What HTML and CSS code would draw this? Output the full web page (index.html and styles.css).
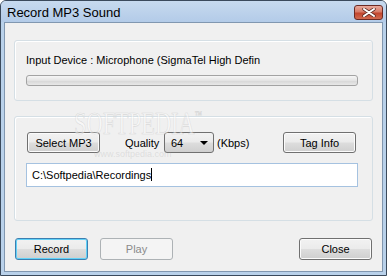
FILE: index.html
```html
<!DOCTYPE html>
<html>
<head>
    <title>Record MP3 Sound</title>
    <link rel="stylesheet" href="styles.css">
</head>
<body>
    <div class="window">
        <div class="titlebar">
            <span class="title">Record MP3 Sound</span>
            <button class="close-x" aria-label="Close">
                <svg width="14" height="9" viewBox="0 0 14 9">
                    <path d="M2 1 L12 8 M12 1 L2 8" stroke="#5a2a24" stroke-width="3.4" stroke-linecap="round"/>
                    <path d="M2 1 L12 8 M12 1 L2 8" stroke="#ffffff" stroke-width="2" stroke-linecap="round"/>
                </svg>
            </button>
        </div>
        <div class="client">
            <div class="group device-group">
                <div class="device-label">Input Device : Microphone (SigmaTel High Defin</div>
                <div class="level-bar"></div>
            </div>

            <div class="group options-group">
                <div class="options-row">
                    <button class="btn select-btn">Select MP3</button>
                    <span class="quality-label">Quality</span>
                    <div class="combo">
                        <span>64</span>
                        <span class="combo-arrow"></span>
                    </div>
                    <span class="unit-label">(Kbps)</span>
                    <button class="btn tag-btn">Tag Info</button>
                </div>
                <div class="path-input">C:\Softpedia\Recordings<span class="caret"></span></div>
            </div>

            <div class="actions">
                <button class="btn default-btn">Record</button>
                <button class="btn disabled-btn">Play</button>
                <button class="btn close-btn">Close</button>
            </div>

            <!-- faint watermark lying over the options group -->
            <div class="watermark">SOFTPEDIA<sup>™</sup></div>
            <div class="watermark-url">www.softpedia.com</div>
        </div>
    </div>
</body>
</html>
```

FILE: styles.css
```css
* {
    box-sizing: border-box;
}
body {
    margin: 0;
    font-family: "Liberation Sans", Arial, sans-serif;
    font-size: 11px;
    color: #000;
}
.window {
    width: 387px;
    height: 276px;
    border: 1px solid #3b4a5c;
    border-radius: 6px 6px 0 0;
    padding: 0 3px 3px 3px;
    background: #b9d1ea;
    display: flex;
    flex-direction: column;
}
.titlebar {
    height: 21px;
    margin: 0 -3px;
    padding: 0 3px 0 6px;
    display: flex;
    align-items: flex-start;
    justify-content: space-between;
    background: linear-gradient(#c7daef, #b3cbe8);
    border-radius: 5px 5px 0 0;
}
.title {
    font-size: 13px;
    padding-top: 4px;
    color: #000;
}
.close-x {
    margin-top: 4px;
    width: 29px;
    height: 15px;
    padding: 0;
    border: 1px solid #6b2a24;
    border-radius: 3px;
    background: linear-gradient(#e8a99c 0%, #d77b68 45%, #c2462f 55%, #d16a50 100%);
    display: flex;
    align-items: center;
    justify-content: center;
}
.client {
    flex: 1;
    position: relative;
    border: 1px solid #8197b0;
    background: #f0f0f0;
    padding: 17px 9px 0 9px;
}
.group {
    border: 1px solid #d5dfe5;
    border-radius: 3px;
    box-shadow: inset 1px 1px 0 #fff;
}
.device-group {
    height: 61px;
    padding: 13px 14px 0 11px;
}
.device-label {
    height: 13px;
    line-height: 13px;
}
.level-bar {
    margin-top: 8px;
    height: 11px;
    border: 1px solid #a3a3a3;
    border-radius: 3px;
    background: linear-gradient(#f6f6f6, #e4e4e4 50%, #d6d6d6 51%, #e8e8e8);
}
.options-group {
    margin-top: 15px;
    height: 105px;
    padding: 15px 14px 0 11px;
}
.options-row {
    display: flex;
    align-items: center;
    height: 21px;
}
.btn {
    font-family: "Liberation Sans", Arial, sans-serif;
    font-size: 11px;
    height: 21px;
    width: 73px;
    padding: 0;
    border: 1px solid #707070;
    border-radius: 3px;
    background: linear-gradient(#f2f2f2, #ebebeb 48%, #dddddd 52%, #cfcfcf);
    box-shadow: inset 0 0 0 1px #fbfbfb;
    color: #000;
}
.select-btn {
    margin-left: 1px;
}
.quality-label {
    margin-left: 25px;
    width: 39px;
}
.combo {
    width: 50px;
    height: 21px;
    border: 1px solid #707070;
    border-radius: 3px;
    background: linear-gradient(#f2f2f2, #ebebeb 48%, #dddddd 52%, #cfcfcf);
    display: flex;
    align-items: center;
    justify-content: space-between;
    padding: 0 0 0 6px;
}
.combo-arrow {
    width: 0;
    height: 0;
    margin-right: 5px;
    border-left: 4px solid transparent;
    border-right: 4px solid transparent;
    border-top: 4px solid #000;
}
.unit-label {
    margin-left: 3px;
}
.tag-btn {
    margin-left: auto;
    margin-right: 2px;
}
.path-input {
    margin-top: 10px;
    height: 24px;
    border: 1px solid #a5c2e0;
    background: #fff;
    line-height: 22px;
    padding-left: 5px;
}
.caret {
    display: inline-block;
    width: 1px;
    height: 13px;
    background: #000;
    vertical-align: -2px;
}
.actions {
    display: flex;
    margin-top: 17px;
    padding-left: 1px;
}
.default-btn {
    height: 22px;
    border-color: #3c7fb1;
    box-shadow: inset 0 0 0 1px #62d2f8;
}
.disabled-btn {
    height: 22px;
    margin-left: 12px;
    border-color: #adb2b5;
    background: #f4f4f4;
    box-shadow: none;
    color: #8b8b8b;
}
.close-btn {
    height: 22px;
    margin-left: auto;
    margin-right: 1px;
}
.watermark {
    position: absolute;
    left: 69px;
    top: 84px;
    font-family: "Liberation Serif", serif;
    font-size: 32px;
    line-height: 32px;
    color: rgba(255, 255, 255, 0.5);
    -webkit-text-stroke: 0.7px rgba(170, 170, 170, 0.35);
    transform: scaleX(0.7);
    transform-origin: left top;
    pointer-events: none;
}
.watermark sup {
    font-size: 10px;
    line-height: 0;
    vertical-align: 16px;
}
.watermark-url {
    position: absolute;
    left: 89px;
    top: 126px;
    font-size: 9px;
    color: rgba(160, 160, 160, 0.25);
    pointer-events: none;
}
```
